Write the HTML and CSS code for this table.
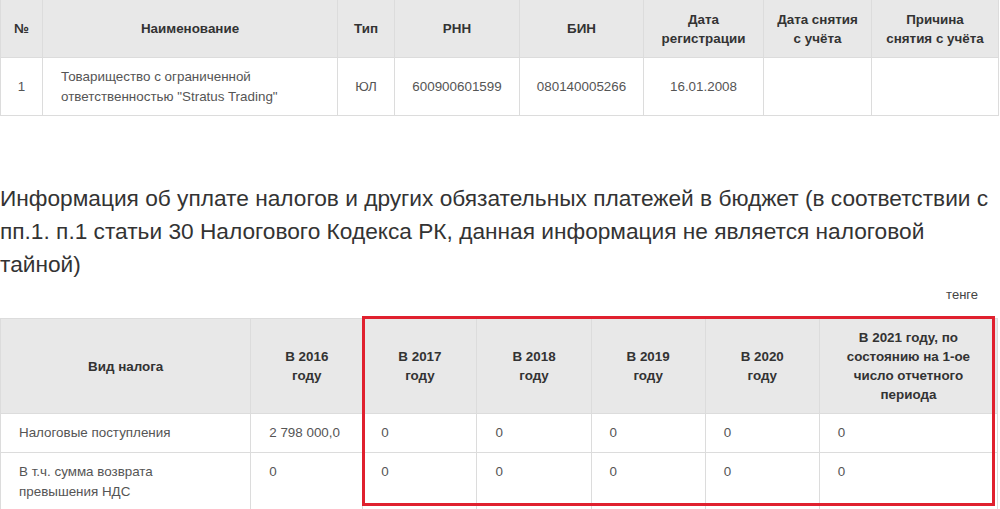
FILE: index.html
```html
<!DOCTYPE html>
<html lang="ru">
<head>
    <meta charset="UTF-8">
    <title>Информация о налогоплательщике</title>
    <link rel="stylesheet" href="styles.css">
</head>
<body>
    <table class="grid reg">
        <colgroup>
            <col style="width:42px">
            <col style="width:295px">
            <col style="width:57px">
            <col style="width:125px">
            <col style="width:124px">
            <col style="width:120px">
            <col style="width:108px">
            <col style="width:127px">
        </colgroup>
        <tr class="head">
            <th>№</th>
            <th>Наименование</th>
            <th>Тип</th>
            <th>РНН</th>
            <th>БИН</th>
            <th>Дата<br>регистрации</th>
            <th>Дата снятия<br>с учёта</th>
            <th>Причина<br>снятия с учёта</th>
        </tr>
        <tr>
            <td>1</td>
            <td class="name">Товарищество с ограниченной<br>ответственностью "Stratus Trading"</td>
            <td>ЮЛ</td>
            <td>600900601599</td>
            <td>080140005266</td>
            <td>16.01.2008</td>
            <td></td>
            <td></td>
        </tr>
    </table>

    <h2 class="title">Информация об уплате налогов и других обязательных платежей в бюджет (в соответствии с пп.1. п.1 статьи 30 Налогового Кодекса РК, данная информация не является налоговой тайной)</h2>
    <div class="unit">тенге</div>

    <div class="tax-wrap">
        <table class="grid tax">
            <colgroup>
                <col style="width:250px">
                <col style="width:112px">
                <col style="width:114px">
                <col style="width:114px">
                <col style="width:114px">
                <col style="width:114px">
                <col style="width:178px">
            </colgroup>
            <tr class="head">
                <th>Вид налога</th>
                <th>В 2016<br>году</th>
                <th>В 2017<br>году</th>
                <th>В 2018<br>году</th>
                <th>В 2019<br>году</th>
                <th>В 2020<br>году</th>
                <th>В 2021 году, по<br>состоянию на 1-ое<br>число отчетного<br>периода</th>
            </tr>
            <tr class="r1">
                <td>Налоговые поступления</td>
                <td>2 798 000,0</td>
                <td>0</td>
                <td>0</td>
                <td>0</td>
                <td>0</td>
                <td>0</td>
            </tr>
            <tr class="r2">
                <td>В т.ч. сумма возврата<br>превышения НДС</td>
                <td>0</td>
                <td>0</td>
                <td>0</td>
                <td>0</td>
                <td>0</td>
                <td>0</td>
            </tr>
        </table>
        <div class="mark"></div>
    </div>
</body>
</html>
```

FILE: styles.css
```css
body { margin: 0; background: #fff; font-family: "Liberation Sans", Arial, sans-serif; color: #333; overflow: hidden; }

.grid { border-collapse: collapse; table-layout: fixed; font-size: 13.4px; }
.grid th, .grid td { border: 1px solid #dcdcdc; padding: 0 10px; }
.grid .head th { background: #e8e8e8; color: #333; font-weight: bold; line-height: 19px; text-align: center; }
.grid td { color: #555; line-height: 20px; }

.reg { width: 998px; margin-top: -1px; }
.reg .head th { height: 57px; }
.reg td { height: 57px; text-align: center; }
.reg td.name { text-align: left; padding-left: 18px; }

.title { margin: 66px 0 0 0; font-size: 22.7px; font-weight: normal; line-height: 33px; color: #333; }
.unit { text-align: right; font-size: 13px; color: #444; padding-right: 22px; margin-top: 6px; }

.tax-wrap { position: relative; margin-top: 16px; }
.tax { width: 998px; }
.tax .head th { height: 94px; }
.tax td { vertical-align: top; text-align: left; padding: 9px 18px; }
.tax .r1 td { height: 20px; }
.tax .r2 td { height: 37px; }

.mark { position: absolute; left: 362px; top: -2px; width: 627px; height: 184px; border: 3px solid #e0202e; }
```
